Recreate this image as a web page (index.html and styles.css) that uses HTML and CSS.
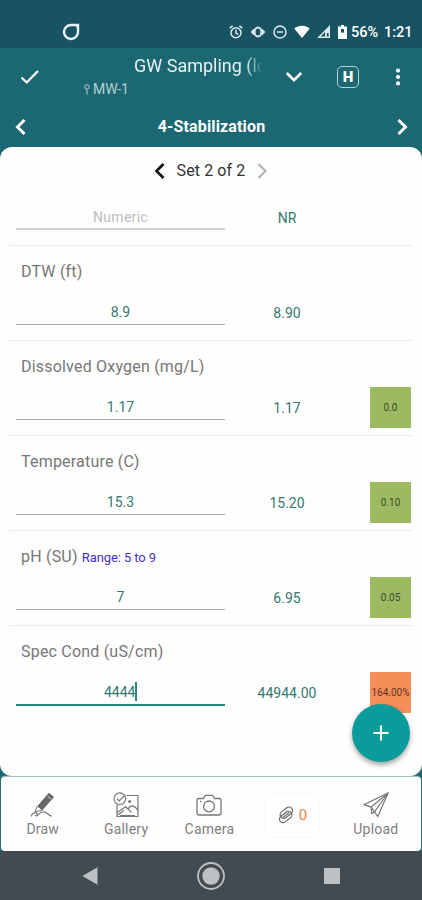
FILE: index.html
```html
<!DOCTYPE html>
<html lang="en">
<head>
    <meta charset="UTF-8" />
    <meta name="viewport" content="width=device-width, initial-scale=1" />
    <title>GW Sampling</title>
    <link rel="stylesheet" href="styles.css">
</head>
<body>
<div class="screen">

    <!-- Status bar -->
    <div class="status-bar">
        <svg class="status-app" width="18" height="18" viewBox="0 0 18 18">
            <path d="M9 2H16V9A7 7 0 1 1 9 2Z" fill="none" stroke="#e8f1f3" stroke-width="2.4"/>
            <path d="M12 1.5H16.5V6Z" fill="#e8f1f3"/>
        </svg>
        <div class="status-icons">
            <svg width="14" height="14" viewBox="0 0 14 14" fill="none" stroke="#dce8ec" stroke-width="1.5">
                <circle cx="7" cy="7.7" r="5"/>
                <path d="M7 4.7V8L9.2 9.3M.8 3.2L3.6 .9M13.2 3.2L10.4 .9"/>
            </svg>
            <svg width="16" height="14" viewBox="0 0 16 14">
                <ellipse cx="8" cy="7" rx="3.4" ry="4.5" fill="none" stroke="#dce8ec" stroke-width="2"/>
                <path d="M4 3.6V10.4L.6 7ZM12 3.6V10.4L15.4 7Z" fill="#dce8ec"/>
            </svg>
            <svg width="14" height="14" viewBox="0 0 14 14" fill="none" stroke="#dce8ec" stroke-width="1.5">
                <circle cx="7" cy="7" r="6"/>
                <path d="M4 7H10"/>
            </svg>
            <svg width="16" height="14" viewBox="0 0 16 14">
                <path d="M.3 3.4C4.8 0 11.2 0 15.7 3.4L8 13Z" fill="#fff"/>
            </svg>
            <svg width="14" height="14" viewBox="0 0 14 14">
                <path d="M1.8 12.3H12.3V1.8Z" fill="none" stroke="#dce8ec" stroke-width="1.4"/>
                <path d="M8 6.5L12.5 1.8V8H9.8V12.5H8Z" fill="#dce8ec"/>
            </svg>
            <svg width="9" height="14" viewBox="0 0 9 14">
                <path d="M3 0H6V1.4H9V14H0V1.4H3Z" fill="#fff"/>
                <path d="M3 4H6V7.6H3Z" fill="#185362"/>
            </svg>
        </div>
        <span class="status-battery">56%</span>
        <span class="status-time">1:21</span>
    </div>

    <!-- App header -->
    <div class="app-header">
        <svg class="check" width="20" height="16" viewBox="0 0 20 16">
            <path d="M1.5 8.5L6.7 13.5L18 2" fill="none" stroke="#fff" stroke-width="2.3"/>
        </svg>
        <div class="heading">
            <div class="title">GW Sampling (lo</div>
            <div class="location">
                <svg width="6" height="11" viewBox="0 0 6 11" fill="none" stroke="#b5d0d4">
                    <circle cx="3" cy="3" r="2.2"/>
                    <path d="M3 5.2V10.5"/>
                </svg>
                MW-1
            </div>
        </div>
        <svg class="dropdown" width="18" height="12" viewBox="0 0 18 12">
            <path d="M1.8 2L9 9.2L16.2 2" fill="none" stroke="#fff" stroke-width="2.7"/>
        </svg>
        <div class="h-button">H</div>
        <svg class="more" width="6" height="18" viewBox="0 0 6 18" fill="#fff">
            <circle cx="3" cy="2.6" r="2.1"/>
            <circle cx="3" cy="9" r="2.1"/>
            <circle cx="3" cy="15.4" r="2.1"/>
        </svg>
    </div>

    <div class="tab-header">
        <svg width="12" height="18" viewBox="0 0 12 18">
            <path d="M9.5 2L2.5 9L9.5 16" fill="none" stroke="#fff" stroke-width="3"/>
        </svg>
        <span>4-Stabilization</span>
        <svg width="12" height="18" viewBox="0 0 12 18">
            <path d="M2.5 2L9.5 9L2.5 16" fill="none" stroke="#fff" stroke-width="3"/>
        </svg>
    </div>

    <!-- Form card -->
    <div class="card">
        <div class="set-nav">
            <svg width="12" height="18" viewBox="0 0 12 18">
                <path d="M9.5 2L2.5 9L9.5 16" fill="none" stroke="#111" stroke-width="2.7"/>
            </svg>
            <span>Set 2 of 2</span>
            <svg width="12" height="18" viewBox="0 0 12 18">
                <path d="M2.5 2L9.5 9L2.5 16" fill="none" stroke="#b4b4b4" stroke-width="2.2"/>
            </svg>
        </div>

        <div class="row row-first">
            <div class="fields">
                <div class="field placeholder">Numeric</div>
                <div class="previous">NR</div>
            </div>
        </div>

        <div class="row">
            <div class="label">DTW (ft)</div>
            <div class="fields">
                <div class="field">8.9</div>
                <div class="previous">8.90</div>
            </div>
        </div>

        <div class="row">
            <div class="label">Dissolved Oxygen (mg/L)</div>
            <div class="fields">
                <div class="field">1.17</div>
                <div class="previous">1.17</div>
                <div class="diff">0.0</div>
            </div>
        </div>

        <div class="row">
            <div class="label">Temperature (C)</div>
            <div class="fields">
                <div class="field">15.3</div>
                <div class="previous">15.20</div>
                <div class="diff">0.10</div>
            </div>
        </div>

        <div class="row">
            <div class="label">pH (SU) <span class="range">Range: 5 to 9</span></div>
            <div class="fields">
                <div class="field">7</div>
                <div class="previous">6.95</div>
                <div class="diff">0.05</div>
            </div>
        </div>

        <div class="row row-last">
            <div class="label">Spec Cond (uS/cm)</div>
            <div class="fields">
                <div class="field active">4444<span class="caret"></span></div>
                <div class="previous">44944.00</div>
                <div class="diff diff-bad">164.00%</div>
            </div>
        </div>

        <div class="fab">
            <svg width="16" height="16" viewBox="0 0 16 16">
                <path d="M8 .5V15.5M.5 8H15.5" stroke="#fff" stroke-width="2"/>
            </svg>
        </div>
    </div>

    <!-- Bottom toolbar -->
    <div class="toolbar">
        <div class="tool">
            <svg width="26" height="26" viewBox="0 0 26 26">
                <path d="M18.8 .8L24 5L12.2 18.4L7 14.4Z" fill="#686868"/>
                <path d="M7 14.4L5.2 19.6L12.2 18.4" fill="#fff" stroke="#707070"/>
                <path d="M17.6 4.3L20.8 6.9" stroke="#fff" stroke-width=".8"/>
                <path d="M1.3 24.3C2 20.8 5.5 19.7 7.2 21.6C8.4 23 6.8 24.6 5.7 23.5C8.5 23.6 10 19.2 14.5 19.8C17.3 20.2 18.2 23.5 21.8 24.2" fill="none" stroke="#777" stroke-width="1.2"/>
            </svg>
            <span>Draw</span>
        </div>
        <div class="tool">
            <svg width="26" height="26" viewBox="0 0 26 26" fill="none" stroke="#777" stroke-width="1.2">
                <path d="M13.5 3.5H25V24.5H4V12.5"/>
                <circle cx="6.8" cy="6.7" r="5.8"/>
                <path d="M4 6.7L6.2 8.8L12 3"/>
                <circle cx="16.7" cy="9.5" r=".9" fill="#666"/>
                <path d="M4 20.5L12.7 14.8L18.5 20.5M4.5 23L11 18.5M15 17.2C18 11.8 22.3 13.8 24.8 18.5M7 23.5H22"/>
            </svg>
            <span>Gallery</span>
        </div>
        <div class="tool">
            <svg width="26" height="26" viewBox="0 0 26 26" fill="none" stroke="#777" stroke-width="1.3">
                <path d="M3 6.5H7.5L9.3 3.3H16.7L18.5 6.5H23Q25 6.5 25 8.5V21Q25 23 23 23H3Q1 23 1 21V8.5Q1 6.5 3 6.5Z"/>
                <circle cx="13" cy="14.4" r="5.4"/>
                <path d="M4 9.5H5.5"/>
            </svg>
            <span>Camera</span>
        </div>
        <div class="tool attachments">
            <svg width="18" height="18" viewBox="0 0 18 18" fill="none" stroke="#6c6c6c" stroke-width="1.2">
                <g transform="rotate(-38 9 9)">
                    <rect x="3.8" y="3.8" width="13.8" height="7.2" rx="3.6"/>
                    <rect x=".6" y="6.8" width="13.8" height="7.2" rx="3.6"/>
                    <path d="M5 9H13"/>
                </g>
            </svg>
            <span class="count">0</span>
        </div>
        <div class="tool">
            <svg width="26" height="26" viewBox="0 0 26 26" fill="none" stroke="#777" stroke-width="1.2">
                <path d="M25 1L1 12.6L8.2 15.1L14.8 24.5Z"/>
                <path d="M25 1L8.2 15.1L8.8 21.5L11.7 19.8M25 1L11.5 19.8"/>
            </svg>
            <span>Upload</span>
        </div>
    </div>

    <!-- Android navigation -->
    <div class="nav-bar">
        <svg width="16" height="18" viewBox="0 0 16 18">
            <path d="M15.5 .3V17.7L.3 9Z" fill="#bbc1c4"/>
        </svg>
        <svg width="30" height="30" viewBox="0 0 30 30">
            <circle cx="15" cy="15" r="13" fill="none" stroke="#bbc1c4" stroke-width="1.8"/>
            <circle cx="15" cy="15" r="8.7" fill="#bbc1c4"/>
        </svg>
        <svg width="16" height="16" viewBox="0 0 16 16">
            <rect width="16" height="16" rx="1" fill="#bbc1c4"/>
        </svg>
    </div>

</div>
</body>
</html>
```
FILE: styles.css
```css
* {
    box-sizing: border-box;
}

body {
    margin: 0;
    font-family: Roboto, "Liberation Sans", sans-serif;
    background: #1b6873;
}

svg {
    display: block;
    flex: none;
}

.screen {
    width: 422px;
    height: 900px;
    display: flex;
    flex-direction: column;
    overflow: hidden;
    background: #1b6873;
}

/* Status bar */
.status-bar {
    height: 48px;
    padding: 16px 10px 0 62px;
    display: flex;
    align-items: center;
    background: #185362;
    color: #fff;
    font-size: 14.5px;
    font-weight: 500;
}

.status-icons {
    display: flex;
    align-items: center;
    gap: 7px;
    margin-left: auto;
}

.status-battery {
    margin-left: 4px;
    width: 33px;
}

.status-time {
    width: 28px;
}

/* Header */
.app-header {
    height: 58px;
    padding: 0 21px 0 20px;
    display: flex;
    align-items: center;
}

.heading {
    width: 180px;
    height: 52px;
    margin-left: 44px;
    white-space: nowrap;
}

.title {
    margin-left: 50px;
    width: 130px;
    padding-top: 3px;
    line-height: 24px;
    font-size: 18px;
    color: #e7f1f2;
    mask-image: linear-gradient(to right, #000 86%, transparent 99%);
}

.location {
    display: flex;
    align-items: center;
    gap: 3px;
    line-height: 20px;
    margin-top: 1px;
    font-size: 14px;
    color: #b5d0d4;
}

.dropdown {
    margin-left: 21px;
}

.h-button {
    width: 22px;
    height: 22px;
    margin-left: 34px;
    border: 1.5px solid #b5d3d6;
    border-radius: 5px;
    color: #fff;
    font-size: 15px;
    font-weight: 900;
    line-height: 20px;
    text-align: center;
}

.more {
    margin-left: auto;
}

.tab-header {
    height: 41px;
    padding: 0 14px 0 15px;
    display: flex;
    align-items: center;
    justify-content: space-between;
    color: #fff;
    font-size: 16px;
    font-weight: 700;
    letter-spacing: 0.15px;
}

/* Card */
.card {
    position: relative;
    height: 629px;
    background: #fefefe;
    border-radius: 12px;
}

.set-nav {
    height: 47px;
    display: flex;
    align-items: center;
    justify-content: center;
    gap: 11px;
    font-size: 16px;
    letter-spacing: 0.1px;
    color: #333;
}

.row {
    height: 95px;
    margin: 0 9px;
    padding: 0 2px 0 7px;
    border-bottom: 1px solid #ececec;
}

.row-first {
    height: 52px;
    padding-top: 3px;
}

.row-last {
    border-bottom: none;
}

.label {
    height: 46px;
    padding: 3px 0 0 5px;
    line-height: 46px;
    font-size: 16px;
    letter-spacing: 0.2px;
    color: #777;
}

.range {
    font-size: 13px;
    letter-spacing: -0.1px;
    color: #3f35c5;
}

.fields {
    height: 41px;
    display: flex;
    align-items: center;
    font-size: 14px;
    color: #34796f;
}

.field {
    width: 209px;
    height: 25px;
    line-height: 25px;
    margin-top: -1px;
    display: flex;
    justify-content: center;
    border-bottom: 1.5px solid #aaa;
}

.field.placeholder {
    color: #bcbcbc;
    border-bottom: 2px solid #cfcfcf;
    letter-spacing: 0.3px;
}

.field.active {
    height: 26px;
    margin-top: 0;
    border-bottom: 2px solid #278778;
}

.caret {
    width: 1.5px;
    height: 19px;
    margin-top: 2px;
    background: #278778;
}

.previous {
    width: 124px;
    text-align: center;
}

.diff {
    width: 41px;
    height: 41px;
    margin-left: 21px;
    background: #9cba62;
    color: #3b4a2c;
    font-size: 10px;
    line-height: 41px;
    text-align: center;
}

.diff-bad {
    background: #f58e59;
    color: #5c3527;
}

/* Floating add button over the card */
.fab {
    position: absolute;
    right: 12px;
    bottom: 14px;
    width: 58px;
    height: 58px;
    display: flex;
    align-items: center;
    justify-content: center;
    border-radius: 50%;
    background: #0c9b9b;
    box-shadow: 0 3px 5px rgba(0,0,0,0.35);
}

/* Bottom toolbar */
.toolbar {
    height: 74px;
    margin: 1px 1px 0 1px;
    padding: 15px 3px 0 0;
    display: flex;
    background: #fefefe;
    border-radius: 4px;
    box-shadow: 0 -1px 1px #b9c8c9;
}

.tool {
    width: 20%;
    height: 46px;
    display: flex;
    flex-direction: column;
    align-items: center;
    font-size: 14px;
    line-height: 20px;
    gap: 1px;
    letter-spacing: 0.2px;
    color: #808080;
}

.attachments {
    width: 56px;
    margin: 0 14px 0 13px;
    flex-direction: row;
    justify-content: center;
    gap: 4px;
    border: 1px solid #f8f8f8;
    border-radius: 6px;
}

.count {
    font-size: 15px;
    color: #e38348;
}

/* System navigation */
.nav-bar {
    height: 49px;
    padding: 0 82px;
    display: flex;
    align-items: center;
    justify-content: space-between;
    background: #434b51;
}
```
